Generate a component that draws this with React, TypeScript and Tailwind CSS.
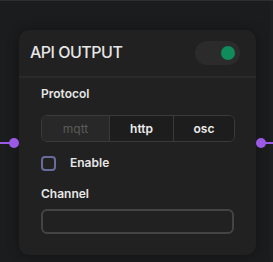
import React from "react";

export default function App() {
  return (
    <div
      className="relative w-[273px] h-[262px] bg-[#1b1c1e] overflow-hidden border-t border-[#2e2e30]"
      style={{ fontFamily: "Inter, 'Liberation Sans', sans-serif" }}
    >
      <div className="absolute right-0 top-0 bottom-0 w-[3px] bg-[#1e1f21]" />
      <div className="relative ml-[19px] mt-[29px] w-[237px] h-[225px] rounded-[10px] bg-[#212121] shadow-[0_0_12px_rgba(0,0,0,0.35)]">
        {/* handles */}
        <div className="absolute left-[-19px] top-[112px] w-[12px] h-[2px] bg-[#9a5ae6]" />
        <div className="absolute left-[-10px] top-[108px] w-[10px] h-[10px] rounded-full bg-[#9a5ae6]" />
        <div className="absolute right-[-17px] top-[112px] w-[12px] h-[2px] bg-[#9a5ae6]" />
        <div className="absolute right-[-10px] top-[108px] w-[10px] h-[10px] rounded-full bg-[#9a5ae6]" />

        <div className="flex items-center justify-between h-[48px] pl-[11px] pr-[16px] border-b-2 border-[#2a2a2a]">
          <span className="-mt-[3px] text-[16px] font-medium text-[#e6e6e6] tracking-[-0.5px]">API OUTPUT</span>
          <div className="w-[45px] h-[24px] rounded-full bg-[#2b2b2b] flex items-center justify-end pr-[5px]">
            <div className="w-[14px] h-[14px] rounded-full bg-[#0f8b5c]" />
          </div>
        </div>

        <div className="px-[22px] pt-[9px] flex flex-col">
          <span className="text-[12px] font-semibold text-[#e6e6e6] leading-[14px]">Protocol</span>
          <div className="mt-[14px] w-[194px] h-[27px] flex rounded-[6px] border border-[#3a3a3a] overflow-hidden text-[12px]">
            <div className="w-[67px] flex items-center justify-center bg-[#282828] text-[#5a5a5a]">mqtt</div>
            <div className="w-[64px] flex items-center justify-center border-l border-[#3a3a3a] bg-[#1d1d1d] text-[#ececec] font-semibold">http</div>
            <div className="flex-1 flex items-center justify-center border-l border-[#3a3a3a] bg-[#1d1d1d] text-[#ececec] font-semibold">osc</div>
          </div>
          <div className="mt-[12px] flex items-center">
            <div className="w-[15px] h-[15px] rounded-[4px] border-2 border-[#6a6a9c]" />
            <span className="ml-[14px] text-[12px] font-semibold text-[#e6e6e6]">Enable</span>
          </div>
          <span className="mt-[15px] text-[12px] font-semibold text-[#e6e6e6] leading-[14px]">Channel</span>
          <div className="mt-[8px] w-[193px] h-[25px] rounded-[6px] border-2 border-[#444444] bg-[#212121]" />
        </div>
      </div>
    </div>
  );
}
